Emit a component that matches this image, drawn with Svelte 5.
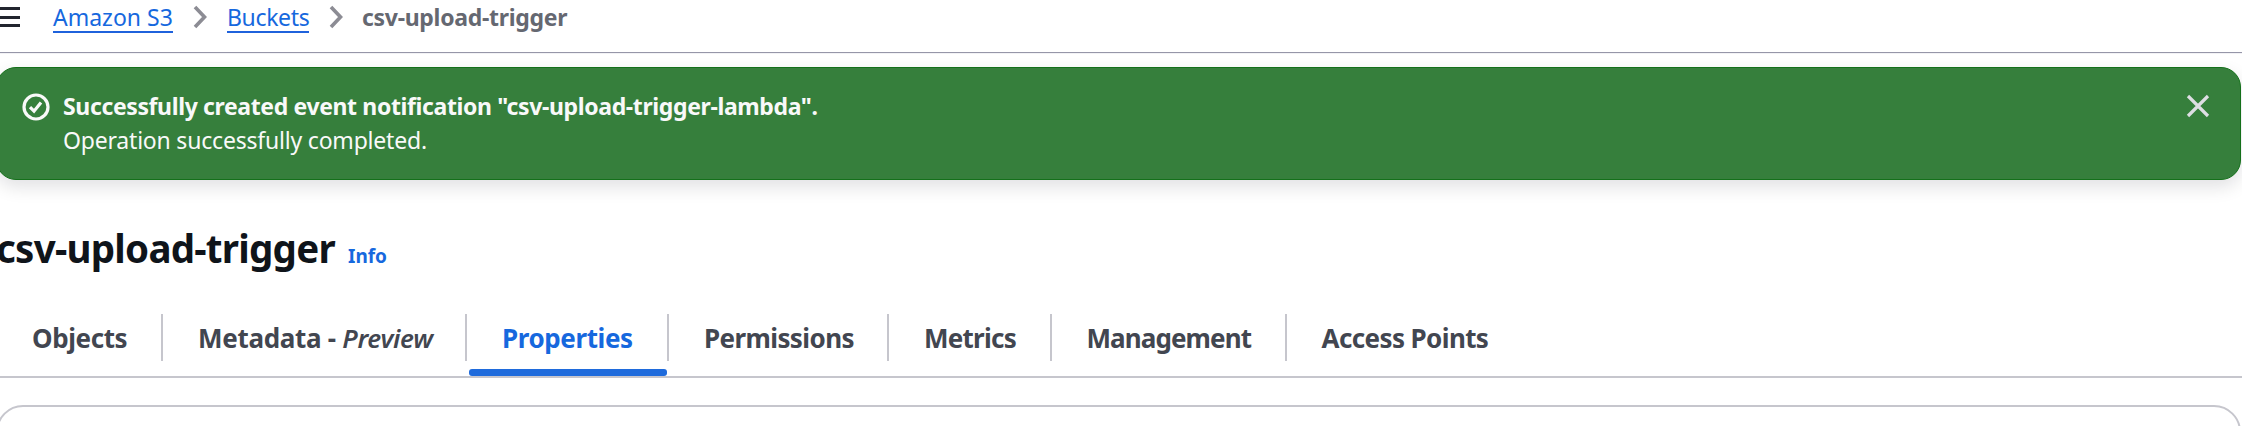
<script>
  const tabs = [
    { label: 'Objects', width: 163, spacing: -0.4 },
    { label: 'Metadata - ', em: 'Preview', width: 304, spacing: -0.3 },
    { label: 'Properties', width: 202, spacing: -0.4, active: true },
    { label: 'Permissions', width: 220, spacing: -0.6 },
    { label: 'Metrics', width: 162.5, spacing: -0.75 },
    { label: 'Management', width: 235, spacing: -0.9 },
    { label: 'Access Points', width: 236, spacing: -0.6 }
  ];
</script>

{#snippet chevron()}
  <svg class="chevron" width="16" height="24" viewBox="0 0 16 24" aria-hidden="true">
    <path d="M3 2 L12.5 12 L3 22" />
  </svg>
{/snippet}

<div class="page">
  <header>
    <button class="menu" aria-label="Open navigation"><i></i><i></i><i></i></button>
    <nav class="crumbs">
      <a class="c1" href="#s3">Amazon S3</a>
      {@render chevron()}
      <a class="c2" href="#buckets">Buckets</a>
      {@render chevron()}
      <span class="current">csv-upload-trigger</span>
    </nav>
  </header>

  <section class="flash">
    <svg class="check" width="28" height="28" viewBox="0 0 28 28" aria-hidden="true">
      <circle cx="14" cy="14" r="12" />
      <path d="M8 14.2 L12 18.2 L19 9.4" />
    </svg>
    <div class="message">
      <strong>Successfully created event notification "csv-upload-trigger-lambda".</strong>
      <span>Operation successfully completed.</span>
    </div>
    <button class="close" aria-label="Dismiss">
      <svg width="24" height="24" viewBox="0 0 24 24"><path d="M2 2 L22 22 M22 2 L2 22" /></svg>
    </button>
  </section>

  <div class="title">
    <h1>csv-upload-trigger</h1>
    <a href="#info">Info</a>
  </div>

  <div class="tabs">
    {#each tabs as tab}
      <button class="tab" class:active={tab.active} style:width="{tab.width}px">
        <span style:letter-spacing="{tab.spacing}px">{tab.label}{#if tab.em}<em>{tab.em}</em>{/if}</span>
      </button>
    {/each}
  </div>

  <section class="panel"></section>
</div>

<style>
  :global(body) { margin: 0; background: #fff; overflow: hidden; }
  * { box-sizing: border-box; }
  .page {
    width: 2242px; height: 426px; overflow: hidden; background: #fff;
    font-family: "Noto Sans", "Open Sans", sans-serif; font-size: 23px; color: #0f141a;
    white-space: nowrap;
  }
  button { padding: 0; border: 0; background: none; font: inherit; color: inherit; }
  header { display: flex; height: 53px; border-bottom: 1px solid #9696a8; box-shadow: 0 0 1px #b4b4c0; }
  .menu { display: flex; flex-direction: column; gap: 5.5px; width: 20px; height: 28px; padding-top: 7px; }
  .menu i { flex: none; height: 3px; background: #22252f; }
  .crumbs { display: flex; align-items: flex-start; padding-left: 33px; line-height: 34px; }
  .crumbs a { height: 33px; border-bottom: 2px solid #1f62dc; color: #1668de; text-decoration: none; }
  .c1 { width: 120px; }
  .c2 { width: 82px; letter-spacing: -.35px; }
  .current { margin-left: -1px; color: #656871; font-weight: 700; letter-spacing: -.3px; }
  .chevron { flex: none; margin: 5px 19px 0 19px; }
  .chevron path { fill: none; stroke: #8c8c94; stroke-width: 3.6; }
  .flash {
    display: flex; width: 2245px; height: 113px; margin: 14px 0 0 -4px; padding: 22px 30px 0 26px;
    border-radius: 20px; border: 1px solid #14701a; background: #367f3c; color: #f9f9f9;
    box-shadow: 0 7px 18px rgba(0, 7, 22, .12);
  }
  .check { flex: none; margin: 3px 13px 0 -1px; }
  .check circle, .check path { fill: none; stroke: #f9f9f9; stroke-width: 3.2; }
  .message { display: flex; flex: 1; flex-direction: column; line-height: 33.5px; }
  .message strong, .message span { align-self: flex-start; }
  .message strong { letter-spacing: -.37px; }
  .message span { letter-spacing: -.2px; }
  .close { width: 24px; height: 24px; margin-top: 4px; }
  .close svg { display: block; }
  .close path { fill: none; stroke: #dedee3; stroke-width: 3.2; }
  .title { display: flex; align-items: baseline; height: 84px; margin: 41px 0 0 -4px; }
  h1 { margin: 0; width: 340px; font-size: 38.5px; line-height: 54px; font-weight: 700; letter-spacing: -.75px; }
  .title a { margin-left: 12px; font-size: 19px; font-weight: 700; color: #1668de; text-decoration: none; }
  .tabs { display: flex; height: 73px; padding-top: 9px; border-bottom: 2px solid #c6c6cd; }
  .tab {
    position: relative; height: 47px; padding-left: 35px; border-right: 2px solid #c6c6cd;
    text-align: left; font-size: 26px; font-weight: 700; line-height: 48px; color: #424650;
  }
  .tab:first-child { padding-left: 32px; }
  .tab:last-child { border-right: 0; }
  .tab em { font-weight: 600; }
  .active { color: #1668de; }
  .active::after {
    content: ""; position: absolute; left: 2px; right: 0; bottom: -15px; height: 7px;
    border-radius: 3px; background: #1f6bdc;
  }
  .panel {
    width: 2245px; height: 80px; margin: 27px 0 0 -4px;
    border: 2px solid #c6c6cd; border-radius: 27px; background: #fff;
  }
</style>
